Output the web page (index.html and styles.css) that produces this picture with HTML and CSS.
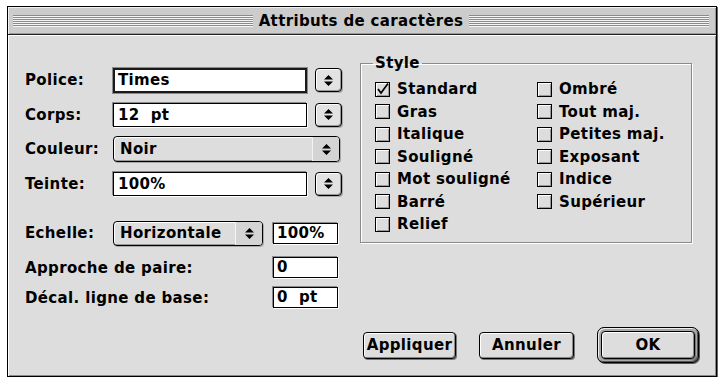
FILE: index.html
```html
<!DOCTYPE html>
<html lang="fr">
<head>
    <meta charset="UTF-8">
    <title>Attributs de caractères</title>
    <link rel="stylesheet" href="styles.css">
</head>
<body>
    <div class="screen">
        <div class="window">
            <div class="titlebar">
                <span class="stripes"></span>
                <span class="title">Attributs de caractères</span>
                <span class="stripes"></span>
            </div>

            <div class="content">
                <div class="main">
                    <div class="left">
                        <div class="row">
                            <span class="label">Police:</span>
                            <span class="field focused">Times</span>
                            <span class="stepper"><svg width="9" height="11" viewBox="0 0 9 11"><path d="M4.5 0 L9 4.5 H0 Z M0 6.5 H9 L4.5 11 Z" fill="#000"/></svg></span>
                        </div>
                        <div class="row">
                            <span class="label">Corps:</span>
                            <span class="field">12&nbsp; pt</span>
                            <span class="stepper"><svg width="9" height="11" viewBox="0 0 9 11"><path d="M4.5 0 L9 4.5 H0 Z M0 6.5 H9 L4.5 11 Z" fill="#000"/></svg></span>
                        </div>
                        <div class="row">
                            <span class="label">Couleur:</span>
                            <span class="popup wide">
                                <span class="popup-text">Noir</span>
                                <span class="popup-arrows"><svg width="9" height="11" viewBox="0 0 9 11"><path d="M4.5 0 L9 4.5 H0 Z M0 6.5 H9 L4.5 11 Z" fill="#000"/></svg></span>
                            </span>
                        </div>
                        <div class="row">
                            <span class="label">Teinte:</span>
                            <span class="field">100%</span>
                            <span class="stepper"><svg width="9" height="11" viewBox="0 0 9 11"><path d="M4.5 0 L9 4.5 H0 Z M0 6.5 H9 L4.5 11 Z" fill="#000"/></svg></span>
                        </div>

                        <div class="row echelle">
                            <span class="label">Echelle:</span>
                            <span class="popup short">
                                <span class="popup-text">Horizontale</span>
                                <span class="popup-arrows"><svg width="9" height="11" viewBox="0 0 9 11"><path d="M4.5 0 L9 4.5 H0 Z M0 6.5 H9 L4.5 11 Z" fill="#000"/></svg></span>
                            </span>
                            <span class="field small">100%</span>
                        </div>
                        <div class="row small-row approche">
                            <span class="label long">Approche de paire:</span>
                            <span class="field small">0</span>
                        </div>
                        <div class="row small-row decal">
                            <span class="label long">Décal. ligne de base:</span>
                            <span class="field small">0&nbsp; pt</span>
                        </div>
                    </div>

                    <fieldset class="group">
                        <legend>Style</legend>
                        <div class="checks">
                            <label class="check"><span class="box"><svg width="13" height="13" viewBox="0 0 13 13"><path d="M2 6 L5 10 L12 0.5" fill="none" stroke="#000" stroke-width="1.7"/></svg></span>Standard</label>
                            <label class="check"><span class="box"></span>Ombré</label>
                            <label class="check"><span class="box"></span>Gras</label>
                            <label class="check"><span class="box"></span>Tout maj.</label>
                            <label class="check"><span class="box"></span>Italique</label>
                            <label class="check"><span class="box"></span>Petites maj.</label>
                            <label class="check"><span class="box"></span>Souligné</label>
                            <label class="check"><span class="box"></span>Exposant</label>
                            <label class="check"><span class="box"></span>Mot souligné</label>
                            <label class="check"><span class="box"></span>Indice</label>
                            <label class="check"><span class="box"></span>Barré</label>
                            <label class="check"><span class="box"></span>Supérieur</label>
                            <label class="check"><span class="box"></span>Relief</label>
                        </div>
                    </fieldset>
                </div>

                <div class="buttons">
                    <span class="button apply">Appliquer</span>
                    <span class="button cancel">Annuler</span>
                    <span class="default-ring"><span class="button ok">OK</span></span>
                </div>
            </div>
        </div>
    </div>
</body>
</html>
```

FILE: styles.css
```css
body {
    margin: 0;
    padding: 0;
    background-color: #fff;
    font-family: "DejaVu Sans", sans-serif;
    font-weight: bold;
    font-size: 15px;
    letter-spacing: 0.35px;
    color: #000;
}

.screen {
    padding: 6px 0 0 7px;
}

.window {
    width: 710px;
    height: 371px;
    box-sizing: border-box;
    border: 1px solid #000;
    background-color: #dddddd;
    display: flex;
    flex-direction: column;
    box-shadow: 1px 1px 0 #666;
}

/* Titelleiste */
.titlebar {
    height: 27px;
    border-bottom: 1px solid #222;
    background-color: #cccccc;
    display: flex;
    align-items: center;
    gap: 6px;
    padding: 0 7px 0 5px;
    box-shadow: inset 1px 1px 0 #f2f2f2, inset -1px -1px 0 #999;
}

.stripes {
    flex: 1;
    height: 12px;
    margin-top: 1px;
    background-image: linear-gradient(to bottom, #8a8a8a 50%, #f6f6f6 50%);
    background-size: 100% 2px;
    background-repeat: repeat-y;
}

.title {
    line-height: 16px;
}

.content {
    flex: 1;
    display: flex;
    flex-direction: column;
    padding: 0 17px 13px 17px;
    box-shadow: inset 1px 1px 0 #fff, inset -1px -1px 0 #8a8a8a;
}

.main {
    display: flex;
    align-items: flex-start;
    gap: 17px;
}

/* linke Spalte */
.left {
    width: 318px;
    padding-top: 32px;
    display: flex;
    flex-direction: column;
}

.row {
    display: flex;
    align-items: center;
    height: 26px;
}

.row + .row {
    margin-top: 8.5px;
}

.row.echelle {
    margin-top: 23.5px;
}

.row.approche {
    margin-top: 11px;
}

.row.decal {
    margin-top: 9px;
}

.small-row {
    height: 21px;
}

.label {
    width: 88px;
    flex: none;
    white-space: nowrap;
}

.label.long {
    width: 248px;
}

.field {
    width: 194px;
    height: 24px;
    box-sizing: border-box;
    border: 1px solid #000;
    background-color: #fff;
    padding-left: 4px;
    line-height: 22px;
    white-space: nowrap;
    box-shadow: -1px -1px 0 #8a8a8a, 1px 1px 0 #fff;
}

.field.focused {
    height: 25px;
    border: 2px solid #1a1a1a;
    padding-left: 3px;
    line-height: 21px;
    box-shadow: 0 0 0 1px #8a8a8a;
}

.field.small {
    width: 65px;
    height: 21px;
    padding-left: 3px;
    line-height: 19px;
}

.stepper {
    width: 27px;
    height: 24px;
    box-sizing: border-box;
    margin-left: 8px;
    border: 1px solid #000;
    border-radius: 4px;
    background-color: #e2e2e2;
    display: flex;
    align-items: center;
    justify-content: center;
    box-shadow: inset 1px 1px 0 #fff, inset -1px -1px 0 #999, 1px 1px 0 #aaa;
}

.popup {
    height: 26px;
    box-sizing: border-box;
    border: 1px solid #000;
    border-radius: 4px;
    background-color: #dddddd;
    display: flex;
    align-items: stretch;
    box-shadow: inset 1px 1px 0 #fff, inset -1px -1px 0 #999, 1px 1px 0 #aaa;
}

.popup.wide {
    width: 227px;
}

.popup.short {
    width: 150px;
    height: 25px;
    margin-right: 10px;
}

.popup-text {
    flex: 1;
    padding-left: 6px;
    display: flex;
    align-items: center;
}

.popup-arrows {
    width: 26px;
    border-left: 1px solid #f4f4f4;
    background-color: #d4d4d4;
    border-radius: 0 3px 3px 0;
    display: flex;
    align-items: center;
    justify-content: center;
}

/* Gruppe Stil */
.group {
    width: 332px;
    box-sizing: border-box;
    margin: 21px 0 0 0;
    padding: 8px 0 6px 14px;
    border: 1px solid #8a8a8a;
    box-shadow: 1px 1px 0 #fff, inset 1px 1px 0 #fff;
}

.group legend {
    padding: 0 2px;
    margin-left: -2px;
    line-height: 14px;
}

.checks {
    display: grid;
    grid-template-columns: 162px 1fr;
    grid-auto-rows: 22.5px;
}

.check {
    display: flex;
    align-items: center;
    white-space: nowrap;
}

.box {
    width: 13px;
    height: 13px;
    flex: none;
    margin-right: 7px;
    border: 1px solid #000;
    background-color: #dddddd;
    box-shadow: inset 1px 1px 0 #fff, inset -1px -1px 0 #999;
    display: flex;
    align-items: center;
    justify-content: center;
}

/* Knöpfe */
.buttons {
    margin-top: auto;
    display: flex;
    justify-content: flex-end;
    align-items: center;
    gap: 23px;
}

.button {
    height: 27px;
    box-sizing: border-box;
    border: 1px solid #000;
    border-radius: 4px;
    background-color: #dddddd;
    display: flex;
    align-items: center;
    justify-content: center;
    box-shadow: inset 1px 1px 0 #fff, inset -1px -1px 0 #888, 1px 1px 0 #777;
}

.apply {
    width: 93px;
}

.cancel {
    width: 95px;
}

.default-ring {
    width: 102px;
    height: 36px;
    box-sizing: border-box;
    border: 1px solid #000;
    border-radius: 7px;
    padding: 3px;
    background-color: #a8a8a8;
    box-shadow: inset 1px 1px 0 #eee, inset -1px -1px 0 #555, 1px 1px 0 #555;
}

.ok {
    width: 100%;
    height: 100%;
    border-radius: 4px;
}
```
